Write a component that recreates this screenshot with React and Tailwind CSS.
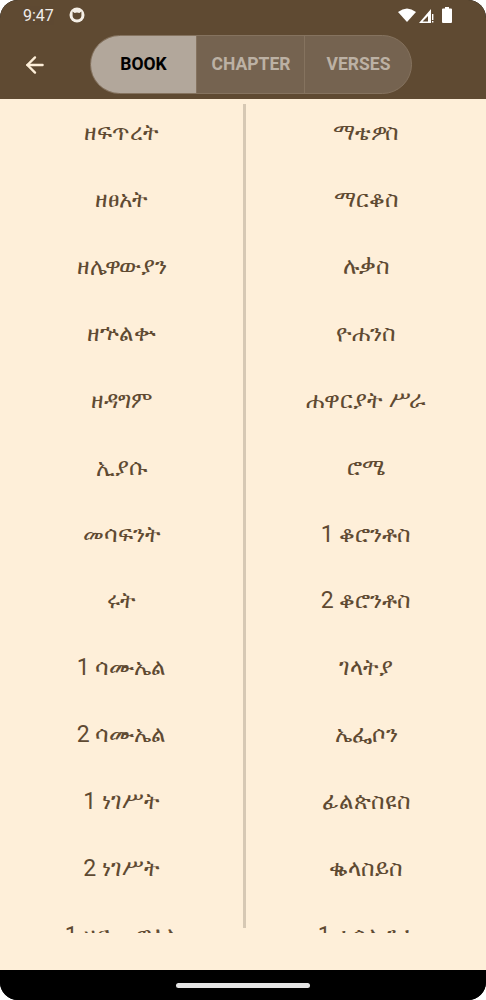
import React from "react";
import { ArrowLeft } from "lucide-react";

const oldBooks = ["ዘፍጥረት", "ዘፀአት", "ዘሌዋውያን", "ዘኍልቍ", "ዘዳግም", "ኢያሱ", "መሳፍንት", "ሩት", "1 ሳሙኤል", "2 ሳሙኤል", "1 ነገሥት", "2 ነገሥት", "1 ዜና መዋዕል"];
const newBooks = ["ማቴዎስ", "ማርቆስ", "ሉቃስ", "ዮሐንስ", "ሐዋርያት ሥራ", "ሮሜ", "1 ቆሮንቶስ", "2 ቆሮንቶስ", "ገላትያ", "ኤፌሶን", "ፊልጵስዩስ", "ቈላስይስ", "1 ተሰሎንቄ"];

function BookColumn({ books }) {
  return (
    <div className="flex-1 min-w-0 flex flex-col -mt-[4px]">
      {books.map((book) => (
        <div key={book} className="h-[66.9px] shrink-0 flex items-center justify-center text-[23px] text-[#5f4a32]">
          {book}
        </div>
      ))}
    </div>
  );
}

export default function App() {
  return (
    <div className="w-[486px] h-[1000px] bg-white overflow-hidden font-['Roboto','DejaVu_Sans',sans-serif]">
      <div className="h-full rounded-[18px] overflow-hidden flex flex-col bg-black">
        {/* status bar + toolbar */}
        <div className="h-[99px] shrink-0 bg-[#5f4a32] flex flex-col">
          <div className="h-[30px] shrink-0 flex items-center pl-[23px] pr-[34px] text-white">
            <span className="text-[16px] leading-none opacity-90 mr-[15px] mt-[1px]">9:47</span>
            <svg width="16" height="16" viewBox="0 0 16 16">
              <circle cx="8" cy="8" r="7.5" fill="#f5efe6" />
              <path d="M3.6 4.6 L5.6 6 Q8 5.2 10.4 6 L12.4 4.6 L12.4 9 Q12 12.4 8 12.4 Q4 12.4 3.6 9 Z" fill="#5f4a32" />
            </svg>
            <div className="ml-auto flex items-center gap-[3px]">
              <svg width="18" height="14" viewBox="0 0 18 14">
                <path d="M0 4 Q9 -3 18 4 L9 14 Z" fill="#fff" />
              </svg>
              <svg width="15" height="15" viewBox="0 0 15 15">
                <path d="M0 15 L12 1 V15 Z M3.5 13.5 H9 V8 Z" fill="#fff" fillRule="evenodd" />
                <path d="M13 6 h1.4 v6 h-1.4 z M13 13 h1.4 v1.6 h-1.4 z" fill="#fff" />
              </svg>
              <svg width="10" height="16" viewBox="0 0 10 16" className="ml-[5px]">
                <path d="M3 0 H7 V1.6 H9 Q10 1.6 10 2.6 V15 Q10 16 9 16 H1 Q0 16 0 15 V2.6 Q0 1.6 1 1.6 H3 Z" fill="#fff" />
              </svg>
            </div>
          </div>
          <div className="flex items-start">
            <div className="w-[90px] shrink-0 h-[59px] mt-[5px] flex items-center pl-[22px]">
              <ArrowLeft size={26} strokeWidth={2.2} color="#fdeed8" />
            </div>
            <div className="w-[322px] h-[59px] mt-[5px] flex rounded-full overflow-hidden border border-[#85735f] bg-[#756350] text-[17.5px] font-bold leading-none">
              <div className="w-[106px] shrink-0 bg-[#b2a79b] text-black flex items-center justify-center pt-[1px] border-r border-[#85735f]">BOOK</div>
              <div className="w-[108px] shrink-0 text-[#bcb1a4] flex items-center justify-center pt-[1px] pl-[1px] border-r border-[#85735f]">CHAPTER</div>
              <div className="flex-1 text-[#bcb1a4] flex items-center justify-center pt-[1px] pl-[1px]">VERSES</div>
            </div>
          </div>
        </div>

        {/* book lists */}
        <div className="h-[871px] shrink-0 bg-[#feefd9] pt-[5px]">
          <div className="h-[829px] flex items-start overflow-hidden">
            <div className="w-[243px] shrink-0 flex flex-col">
              <BookColumn books={oldBooks} />
            </div>
            <div className="w-[3px] h-[824px] shrink-0 bg-[#d6c8b4]" />
            <BookColumn books={newBooks} />
          </div>
        </div>

        {/* nav bar */}
        <div className="flex-1 bg-black flex items-center justify-center">
          <div className="w-[134px] h-[5px] rounded-full bg-[#e4e4e4]" />
        </div>
      </div>
    </div>
  );
}
